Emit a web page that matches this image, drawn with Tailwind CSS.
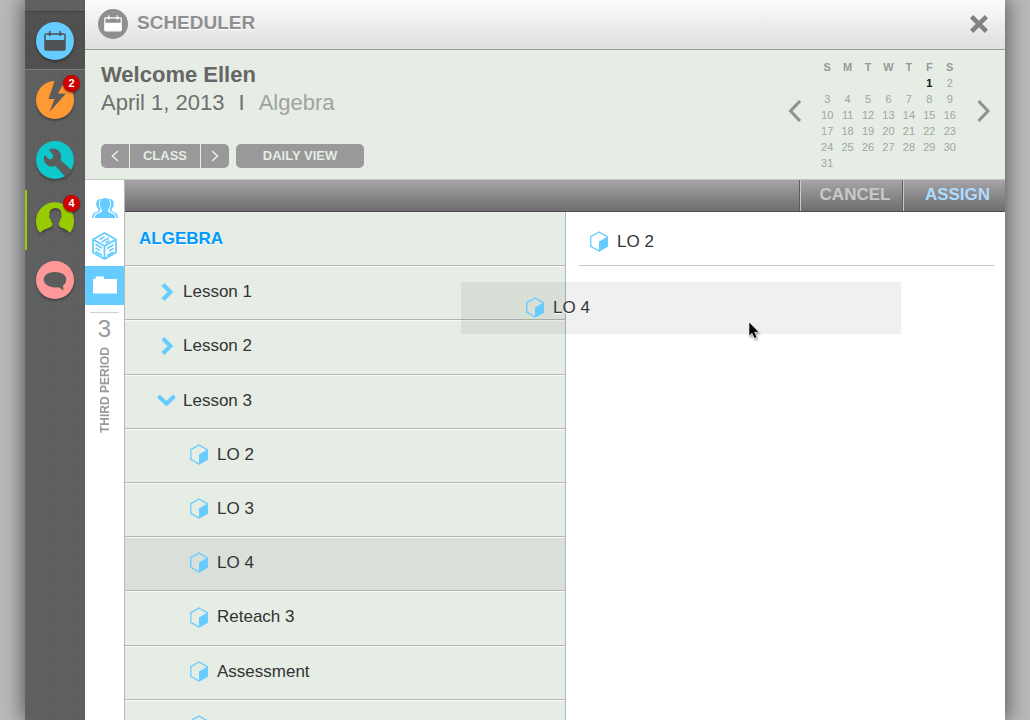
<!DOCTYPE html>
<html lang="en">
<head>
<meta charset="utf-8">
<meta name="viewport" content="width=device-width, initial-scale=1">
<title>Scheduler</title>
<script src="https://cdn.jsdelivr.net/npm/@tailwindcss/browser@4"></script>
</head>
<body class="h-screen overflow-hidden bg-[#bababa] px-[25px] font-['Liberation_Sans',Arial,sans-serif] text-[#333]">
<svg class="hidden" aria-hidden="true">
  <symbol id="cube" viewBox="0 0 18 21">
    <path d="M9 1 17.2 5.7V15.3L9 20 .8 15.3V5.7Z" fill="none" stroke="#66ccff" stroke-width="1.3"/>
    <path d="M9 10.6 17.6 5.6V15.6L9 20.6Z" fill="#66ccff"/>
  </symbol>
  <symbol id="calendar" viewBox="0 0 22 20">
    <rect x="1" y="3" width="20" height="16" rx="1" fill="none" stroke="currentColor" stroke-width="1.500"/>
    <path fill="currentColor" d="M1 9H21V19H1ZM5 0H6.500V5H5ZM15.500 0H17V5H15.500ZM4 2.300H7.500V3.800H4ZM14.500 2.300H18V3.800H14.500Z"/>
  </symbol>
</svg>
<div class="flex h-full shadow-[0_0_20px_2px_rgba(0,0,0,0.55)]">

  <nav aria-label="Tools" class="w-[60px] shrink-0 bg-[#5f5f5f] bg-[repeating-linear-gradient(90deg,rgba(255,255,255,0.02)_0_1px,transparent_1px_5px,rgba(0,0,0,0.015)_5px_6px,transparent_6px_11px),repeating-linear-gradient(0deg,rgba(255,255,255,0.015)_0_1px,transparent_1px_7px,rgba(0,0,0,0.015)_7px_8px,transparent_8px_13px)] pt-[11px]">
    <button aria-label="Scheduler" class="flex h-[59px] w-full items-center justify-center border-t border-b border-t-[#424242] border-b-[#7c7c7c] bg-black/15">
      <span class="flex size-[38px] items-center justify-center rounded-full bg-[#66ccff] text-[#505355] shadow-[0_2px_3px_rgba(0,0,0,0.35)]">
        <svg class="h-5 w-[22px]"><use href="#calendar"/></svg>
      </span>
    </button>
    <button aria-label="Alerts, 2 new" class="relative flex h-[60px] w-full items-center justify-center">
      <svg class="size-[38px] drop-shadow-[0_2px_1px_rgba(0,0,0,0.3)]" viewBox="0 0 38 38">
        <circle cx="19" cy="19" r="19" fill="#ff9933"/>
        <path fill="#5c5c5c" d="M18.500 0 12.500 18H18.500L13.500 31 30 12.500H22L29 0Z"/>
      </svg>
      <span class="absolute top-[5px] right-[5px] flex size-[17px] items-center justify-center rounded-full bg-[#cc0000] text-[11px] leading-none font-bold text-white shadow-[0_1px_2px_rgba(0,0,0,0.5)]">2</span>
    </button>
    <button aria-label="Settings" class="flex h-[60px] w-full items-center justify-center">
      <svg class="size-[38px] drop-shadow-[0_2px_1px_rgba(0,0,0,0.3)]" viewBox="0 0 38 38">
        <circle cx="19" cy="19" r="19" fill="#0cc8cb"/>
        <path fill="#5c5c5c" d="M13 9Q18 6 22.500 9.500Q26.500 13.500 24.500 19L36 29.500 29.500 36 19.500 25Q14 27 10 23Q6.500 19 8.500 14L13.500 18.500 16.500 17.500 17.500 14.500Z"/>
      </svg>
    </button>
    <button aria-label="Students, 4 new" class="relative flex h-[60px] w-full items-center justify-center border-l-2 border-[#99cc00] pr-[2px]">
      <svg class="size-[38px] drop-shadow-[0_2px_1px_rgba(0,0,0,0.3)]" viewBox="0 0 38 38">
        <path fill="#99cc00" d="M4 32A19 19 0 1 1 34 32Q31 28 25 26.500Q22.500 25 22.500 22.500Q24 21 24.300 18Q26 17 25.300 14.500Q26 7 19.500 7Q13 7 13.500 14.500Q12.500 17 14.500 18Q15 21 16.500 22.500Q16.500 25 14 26.500Q7 28 4 32Z"/>
      </svg>
      <span class="absolute top-[5px] right-[5px] flex size-[17px] items-center justify-center rounded-full bg-[#cc0000] text-[11px] leading-none font-bold text-white shadow-[0_1px_2px_rgba(0,0,0,0.5)]">4</span>
    </button>
    <button aria-label="Messages" class="flex h-[60px] w-full items-center justify-center">
      <svg class="size-[38px] drop-shadow-[0_2px_1px_rgba(0,0,0,0.3)]" viewBox="0 0 38 38">
        <circle cx="19" cy="19" r="19" fill="#ff9999"/>
        <path fill="#5c5c5c" d="M19 11C25.500 11 30.300 14 30.300 18.500C30.300 21 29 23 27 24.500L27.500 29.500 22.500 26.200C14 27.500 7.700 23.500 7.700 18.500C7.700 14 12.500 11 19 11Z"/>
      </svg>
    </button>
  </nav>

  <div class="flex min-w-0 flex-1 flex-col bg-white">
    <header class="flex h-[50px] shrink-0 items-center border-b border-[#999] bg-linear-to-b from-[#fbfbfb] to-[#dfdfdf] pr-[17px] pb-[2px] pl-[13px]">
      <span class="flex size-[30px] items-center justify-center rounded-full bg-[#8f8f8f] text-white">
        <svg class="h-[17px] w-[18px]"><use href="#calendar"/></svg>
      </span>
      <h1 class="ml-[9px] text-[19px] font-bold text-[#8f8f8f] [text-shadow:0_1px_0_#fff]">SCHEDULER</h1>
      <button aria-label="Close" class="ml-auto">
        <svg class="size-[18px]" viewBox="0 0 18 18" stroke="#828282" stroke-width="4.500"><path d="M1.600 1.600 16.400 16.400M16.400 1.600 1.600 16.400"/></svg>
      </button>
    </header>

    <section class="flex h-[130px] shrink-0 justify-between border-b border-[#c2c6c2] bg-[#e5ede5] pr-[15px] pl-4">
      <div class="pt-[11px]">
        <h2 class="text-[22px] leading-7 font-bold text-[#666]">Welcome Ellen</h2>
        <p class="text-[22px] leading-7 text-[#707070]">April 1, 2013<span class="mx-[14px]">I</span><span class="text-[#a0a3a0]">Algebra</span></p>
        <div class="mt-[27px] flex gap-[7px] text-[13px] font-bold text-[#e5ede5]">
          <div class="flex h-6 gap-px overflow-hidden rounded-[5px]">
            <button aria-label="Previous class" class="flex w-7 items-center justify-center bg-[#999]"><svg class="h-3 w-2" fill="none" stroke="currentColor" stroke-width="1.600"><path d="M7 1 1.500 6 7 11"/></svg></button>
            <button class="w-[70px] bg-[#999]">CLASS</button>
            <button aria-label="Next class" class="flex w-7 items-center justify-center bg-[#999]"><svg class="h-3 w-2" fill="none" stroke="currentColor" stroke-width="1.600"><path d="M1 1 6.500 6 1 11"/></svg></button>
          </div>
          <button class="h-6 w-32 rounded-[5px] bg-[#999]">DAILY VIEW</button>
        </div>
      </div>
      <div class="flex items-center gap-4">
        <button aria-label="Previous month" class="pb-2"><svg class="h-[22px] w-[14px]" fill="none" stroke="#8f928f" stroke-width="3"><path d="M13 1 3.500 11 13 21"/></svg></button>
        <table aria-label="Month" class="w-[143px] table-fixed text-center text-[11px] leading-4 text-[#a1a6a1]">
          <thead class="text-[#979a97]"><tr><th>S</th><th>M</th><th>T</th><th>W</th><th>T</th><th>F</th><th>S</th></tr></thead>
          <tbody>
            <tr><td></td><td></td><td></td><td></td><td></td><td class="font-bold text-[#111]">1</td><td>2</td></tr>
            <tr><td>3</td><td>4</td><td>5</td><td>6</td><td>7</td><td>8</td><td>9</td></tr>
            <tr><td>10</td><td>11</td><td>12</td><td>13</td><td>14</td><td>15</td><td>16</td></tr>
            <tr><td>17</td><td>18</td><td>19</td><td>20</td><td>21</td><td>22</td><td>23</td></tr>
            <tr><td>24</td><td>25</td><td>26</td><td>27</td><td>28</td><td>29</td><td>30</td></tr>
            <tr><td>31</td><td></td><td></td><td></td><td></td><td></td><td></td></tr>
          </tbody>
        </table>
        <button aria-label="Next month" class="pb-2"><svg class="h-[22px] w-[14px]" fill="none" stroke="#8f928f" stroke-width="3"><path d="M2.500 1 12 11 2.500 21"/></svg></button>
      </div>
    </section>

    <div class="flex min-h-0 flex-1">
      <aside class="flex w-10 shrink-0 flex-col border-r border-[#b5b9b5] bg-white text-[#66ccff]">
        <button aria-label="Groups" class="flex h-[47px] items-center justify-center pt-2">
          <svg class="h-5 w-[26px]" viewBox="0 0 26 20" fill="currentColor">
            <path d="M0 20Q0 15.800 3 14.600L6 13.300Q7 12.500 6.300 11Q4 9 4.300 7Q3.500 1 9.500 .8Q6.300 3 7 6.500Q6.300 8.500 8 10Q9 13 6.500 14L4 15.300Q1.600 16.500 1.500 20Z"/>
            <path d="M26 20Q26 15.800 23 14.600L20 13.300Q19 12.500 19.700 11Q22 9 21.700 7Q22.500 1 16.500 .8Q19.700 3 19 6.500Q19.700 8.500 18 10Q17 13 19.500 14L22 15.300Q24.400 16.500 24.500 20Z"/>
            <path d="M2.700 20Q2.500 17 5 16L9 14.300Q10.500 13.500 10 12Q8.500 10.500 8.300 8.500Q7.200 7.500 8 6Q7.500 0 13 0Q18.500 0 18 6Q18.800 7.500 17.700 8.500Q17.500 10.500 16 12Q15.500 13.500 17 14.300L21 16Q23.500 17 23.300 20Z"/>
          </svg>
        </button>
        <button aria-label="Library" class="flex h-[39px] items-center justify-center pb-px">
          <svg class="h-7 w-[25px]" viewBox="0 0 25 28" fill="none" stroke="currentColor" stroke-width="1.600">
            <path stroke-width="1.800" d="M12.500 1 24 7.500V20.500L12.500 27 1 20.500V7.500ZM1 7.500 12.500 14 24 7.500M12.500 14V27"/>
            <path d="M7.500 7.500 12.500 4.700M9.700 10 17 6M13.500 11 17.500 8.700M3.500 12.300 10 16M3.500 16 8 18.600M3.500 19.500 10 23.200M15 16.500 21.500 12.700M17 19 21.500 16.400M15 23.700 21.500 20"/>
          </svg>
        </button>
        <button aria-label="Lessons" class="flex h-[39px] items-center justify-center bg-[#66ccff] pb-px text-white">
          <svg class="h-[18px] w-6" viewBox="0 0 24 18" fill="currentColor"><path d="M0 17.500V3H2.500V1.500Q2.500 .5 3.500 .5H10Q11 .5 11 1.500V3H23Q24 3 24 4V17.500Z"/></svg>
        </button>
        <div class="mx-[5px] mt-[7px] flex flex-col items-center border-t border-[#d0d0d0] pt-1 text-[#999]">
          <span class="text-[24px] leading-6">3</span>
          <span class="mt-[6px] rotate-180 text-[12px] leading-4 font-bold [writing-mode:vertical-rl]">THIRD PERIOD</span>
        </div>
      </aside>

      <div class="flex min-w-0 flex-1 flex-col">
        <div class="flex h-8 shrink-0 justify-end border-b border-[#4d4b4d] bg-linear-to-b from-[#a6a4a6] to-[#6f6d6f] text-[17px] font-bold [text-shadow:0_1px_2px_rgba(0,0,0,0.5)]">
          <button class="w-[103px] border-l border-[#c9c9c9] pb-[2px] pl-[6px] text-[#c9c9c9] shadow-[-1px_0_0_#5d5b5d]">CANCEL</button>
          <button class="w-[102px] border-l border-[#c9c9c9] pb-[2px] pl-[6px] text-[#aaddff] shadow-[-1px_0_0_#5d5b5d]">ASSIGN</button>
        </div>

        <div class="relative grid min-h-0 flex-1 grid-cols-2 text-[17px]">
          <section class="overflow-hidden bg-[#e5ede5] [text-shadow:0_1px_0_#fff]">
            <h3 class="flex h-[54px] items-center border-b border-[#b1b7b1] pl-[14px] font-bold text-[#0099ff]">ALGEBRA</h3>
            <ul>
              <li class="h-[54px] border-b border-[#b1b7b1] nth-[5n+2]:h-[55px]"><button class="flex h-full w-full items-center border-t border-[#f8fbf8] pb-[3px] pl-9"><svg class="h-[18px] w-[13px]" fill="none" stroke="#66ccff" stroke-width="4"><path d="M2 1.500 9.500 9 2 16.500"/></svg><span class="ml-[9px]">Lesson 1</span></button></li>
              <li class="h-[54px] border-b border-[#b1b7b1] nth-[5n+2]:h-[55px]"><button class="flex h-full w-full items-center border-t border-[#f8fbf8] pb-[3px] pl-9"><svg class="h-[18px] w-[13px]" fill="none" stroke="#66ccff" stroke-width="4"><path d="M2 1.500 9.500 9 2 16.500"/></svg><span class="ml-[9px]">Lesson 2</span></button></li>
              <li class="h-[54px] border-b border-[#b1b7b1] nth-[5n+2]:h-[55px]"><button class="flex h-full w-full items-center border-t border-[#f8fbf8] pb-[3px] pl-8"><svg class="h-[13px] w-[19px]" fill="none" stroke="#66ccff" stroke-width="4"><path d="M1.500 2 9.500 9.700 17.500 2"/></svg><span class="ml-[7px]">Lesson 3</span></button></li>
              <li class="h-[54px] border-b border-[#b1b7b1] nth-[5n+2]:h-[55px]"><button class="flex h-full w-full items-center border-t border-[#f8fbf8] pb-[3px] pl-[65px]"><svg class="h-[21px] w-[18px]"><use href="#cube"/></svg><span class="ml-[9px]">LO 2</span></button></li>
              <li class="h-[54px] border-b border-[#b1b7b1] nth-[5n+2]:h-[55px]"><button class="flex h-full w-full items-center border-t border-[#f8fbf8] pb-[3px] pl-[65px]"><svg class="h-[21px] w-[18px]"><use href="#cube"/></svg><span class="ml-[9px]">LO 3</span></button></li>
              <li class="h-[54px] border-b border-[#b1b7b1] bg-[#d9e0d9] nth-[5n+2]:h-[55px]"><button class="flex h-full w-full items-center border-t border-[#f8fbf8] pb-[3px] pl-[65px]"><svg class="h-[21px] w-[18px]"><use href="#cube"/></svg><span class="ml-[9px]">LO 4</span></button></li>
              <li class="h-[54px] border-b border-[#b1b7b1] nth-[5n+2]:h-[55px]"><button class="flex h-full w-full items-center border-t border-[#f8fbf8] pb-[3px] pl-[65px]"><svg class="h-[21px] w-[18px]"><use href="#cube"/></svg><span class="ml-[9px]">Reteach 3</span></button></li>
              <li class="h-[54px] border-b border-[#b1b7b1] nth-[5n+2]:h-[55px]"><button class="flex h-full w-full items-center border-t border-[#f8fbf8] pb-[3px] pl-[65px]"><svg class="h-[21px] w-[18px]"><use href="#cube"/></svg><span class="ml-[9px]">Assessment</span></button></li>
              <li class="h-[54px] border-b border-[#b1b7b1] nth-[5n+2]:h-[55px]"><button aria-label="Next item" class="flex h-full w-full items-center border-t border-[#f8fbf8] pb-[3px] pl-[65px]"><svg class="h-[21px] w-[18px]"><use href="#cube"/></svg></button></li>
            </ul>
          </section>

          <section class="border-l border-[#b5b9b5] pr-[11px] pl-[13px]">
            <div class="flex h-[54px] items-center border-b border-[#c4c4c4] pt-[6px] pl-[11px]"><svg class="h-[21px] w-[18px]"><use href="#cube"/></svg><span class="ml-[9px]">LO 2</span></div>
          </section>

          <!-- Item being dragged to the assignment list -->
          <div class="absolute top-[70px] left-[336px] flex h-[52px] w-1/2 items-center bg-black/6 pb-px pl-[65px] [text-shadow:0_1px_0_#fff]"><svg class="h-[21px] w-[18px]"><use href="#cube"/></svg><span class="ml-[9px]">LO 4</span></div>
          <svg class="absolute top-[109px] left-[623px] h-[19px] w-[13px] overflow-visible drop-shadow-[1px_2px_1px_rgba(0,0,0,0.35)]" viewBox="0 0 13 19"><path d="M1 1V15L4 12.200 6.300 17.300 8.800 16.200 6.600 11.200H11Z" fill="#000" stroke="#fff" stroke-width=".6"/></svg>
        </div>
      </div>
    </div>
  </div>
</div>
</body>
</html>
